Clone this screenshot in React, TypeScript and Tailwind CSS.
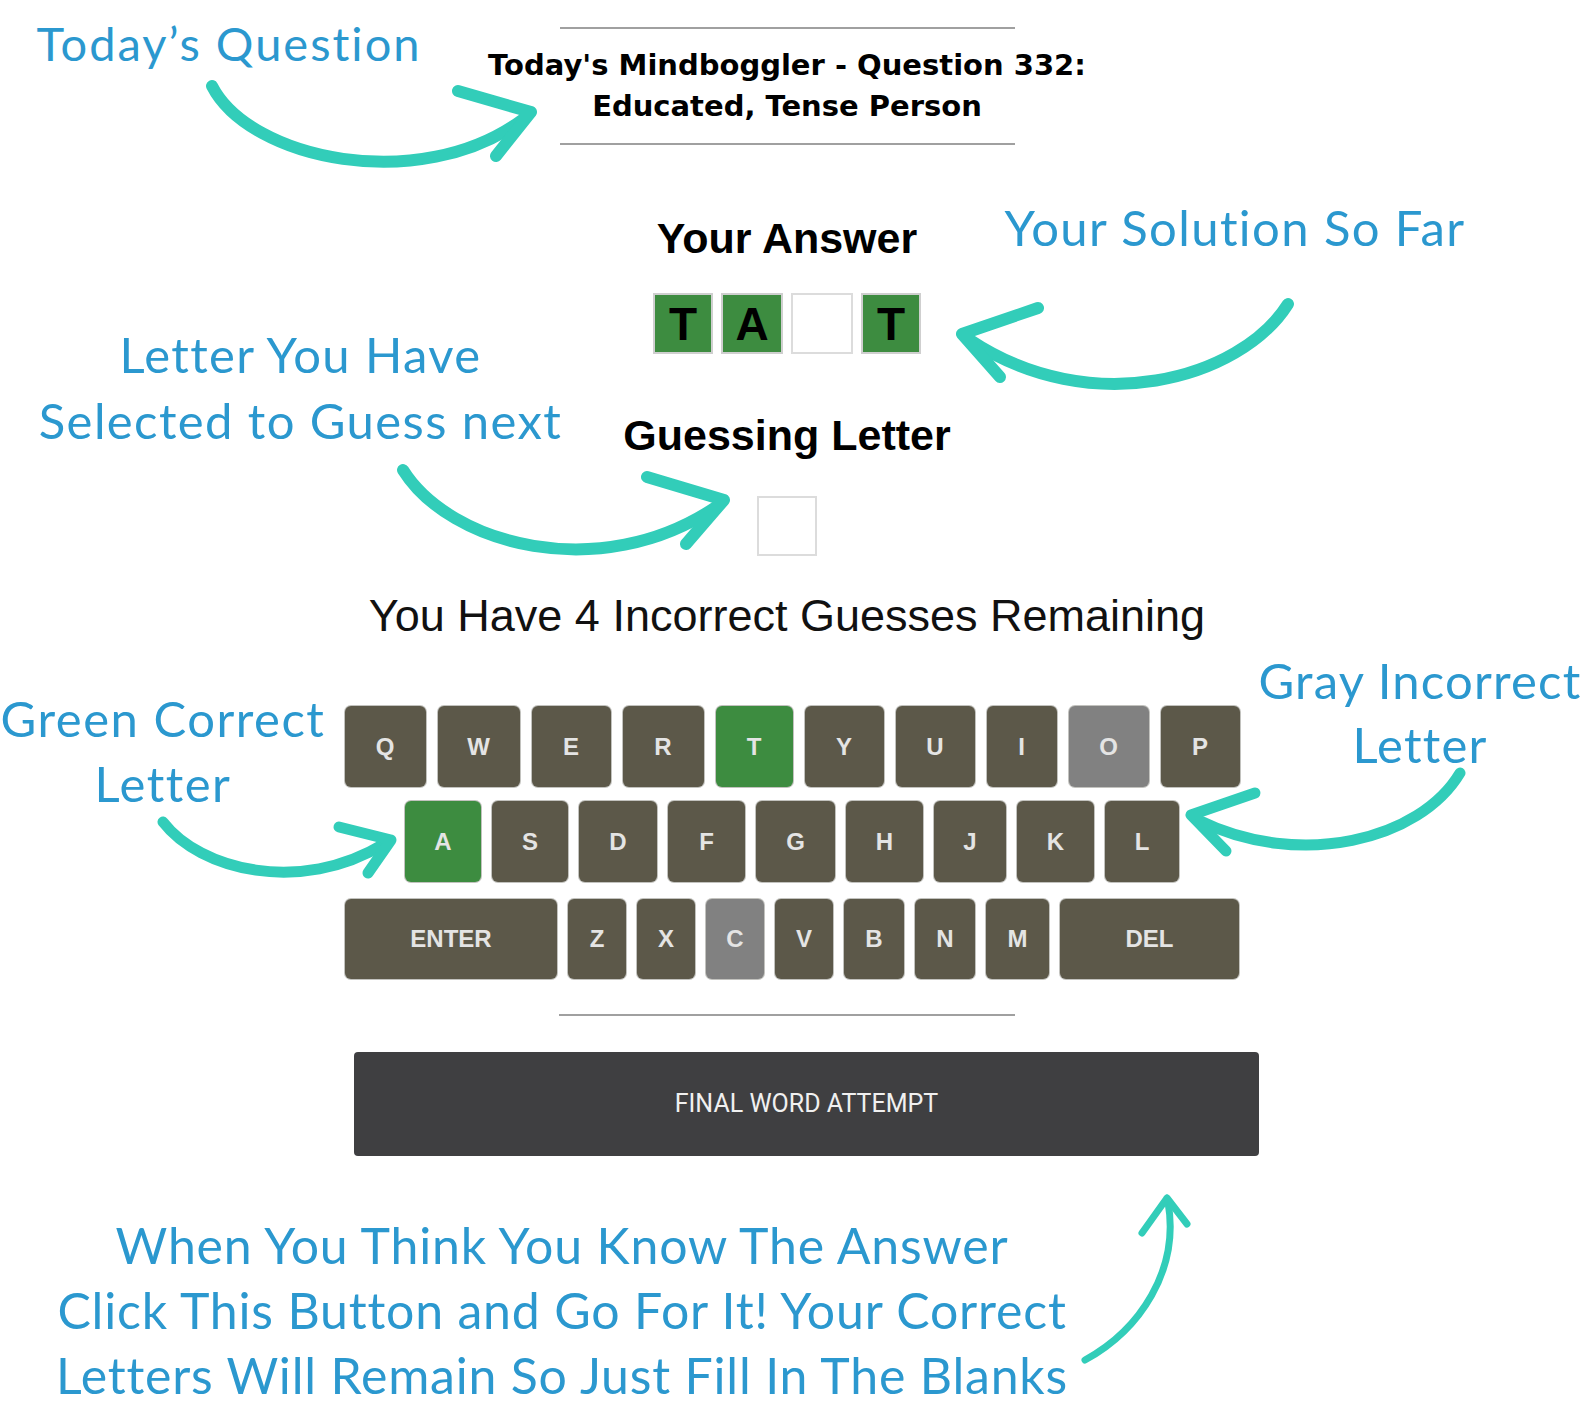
import React from "react";

type K = { l: string; w: string; c?: "g" | "x" };

const row1: K[] = [
  { l: "Q", w: "w-[81px]" },
  { l: "W", w: "w-[82px]" },
  { l: "E", w: "w-[79px]" },
  { l: "R", w: "w-[81px]" },
  { l: "T", w: "w-[77px]", c: "g" },
  { l: "Y", w: "w-[79px]" },
  { l: "U", w: "w-[79px]" },
  { l: "I", w: "w-[70px]" },
  { l: "O", w: "w-[80px]", c: "x" },
  { l: "P", w: "w-[79px]" },
];
const row2: K[] = [
  { l: "A", w: "w-[76px]", c: "g" },
  { l: "S", w: "w-[76px]" },
  { l: "D", w: "w-[78px]" },
  { l: "F", w: "w-[77px]" },
  { l: "G", w: "w-[79px]" },
  { l: "H", w: "w-[77px]" },
  { l: "J", w: "w-[72px]" },
  { l: "K", w: "w-[77px]" },
  { l: "L", w: "w-[74px]" },
];
const row3: K[] = [
  { l: "ENTER", w: "w-[212px]" },
  { l: "Z", w: "w-[58px]" },
  { l: "X", w: "w-[58px]" },
  { l: "C", w: "w-[58px]", c: "x" },
  { l: "V", w: "w-[58px]" },
  { l: "B", w: "w-[60px]" },
  { l: "N", w: "w-[60px]" },
  { l: "M", w: "w-[63px]" },
  { l: "DEL", w: "w-[179px]" },
];

function Key({ k, h }: { k: K; h: string }) {
  const bg =
    k.c === "g" ? "bg-[#3d8c40]" : k.c === "x" ? "bg-[#818181]" : "bg-[#5c5849]";
  return (
    <div
      className={`${k.w} ${h} ${bg} rounded-[6px] shadow-[0_0_0_1px_rgba(120,120,110,0.45)] flex items-center justify-center font-['Liberation_Sans',Arial,sans-serif] font-bold text-[24px] text-[#e4e4e4]`}
    >
      {k.l}
    </div>
  );
}

function Tile({ letter, w }: { letter?: string; w: string }) {
  return (
    <div
      className={`${w} h-[61px] border-2 ${
        letter ? "bg-[#3d8c40] border-[#cfcfcf]" : "bg-white border-[#dcdcdc]"
      } flex items-center justify-center font-['Liberation_Sans',Arial,sans-serif] font-bold text-[46px] leading-none text-black`}
    >
      {letter}
    </div>
  );
}

const teal = "#32cdb9";

function Arrows() {
  const common = {
    fill: "none",
    stroke: teal,
    strokeLinecap: "round" as const,
    strokeLinejoin: "round" as const,
  };
  return (
    <svg
      className="absolute left-0 top-0 pointer-events-none"
      width="1587"
      height="1421"
      viewBox="0 0 1587 1421"
    >
      {/* Today's question */}
      <path d="M 212 86 C 250 160, 420 195, 522 120" strokeWidth="12" {...common} />
      <path d="M 531 112 L 458 91 M 531 112 L 496 156" strokeWidth="12" {...common} />
      {/* Your solution so far */}
      <path d="M 1288 304 C 1240 380, 1090 420, 970 340" strokeWidth="12" {...common} />
      <path d="M 962 334 L 1038 308 M 962 334 L 1000 377" strokeWidth="12" {...common} />
      {/* Letter you have selected */}
      <path d="M 403 470 C 450 545, 600 585, 716 507" strokeWidth="12" {...common} />
      <path d="M 724 500 L 647 477 M 724 500 L 686 544" strokeWidth="12" {...common} />
      {/* Green correct */}
      <path d="M 163 822 C 200 870, 300 895, 384 844" strokeWidth="11" {...common} />
      <path d="M 391 840 L 339 827 M 391 840 L 368 873" strokeWidth="11" {...common} />
      {/* Gray incorrect */}
      <path d="M 1460 773 C 1420 840, 1300 870, 1198 820" strokeWidth="11" {...common} />
      <path d="M 1191 815 L 1255 793 M 1191 815 L 1226 851" strokeWidth="11" {...common} />
      {/* Final button */}
      <path d="M 1085 1360 C 1140 1330, 1180 1270, 1168 1202" strokeWidth="7" {...common} />
      <path d="M 1167 1198 L 1142 1233 M 1167 1198 L 1187 1224" strokeWidth="7" {...common} />
    </svg>
  );
}

export default function App() {
  return (
    <div className="relative w-[1587px] h-[1421px] bg-white overflow-hidden">
      <div className="flex flex-col items-center w-[1574px] pt-[27px]">
        <div className="w-[455px] h-[2px] bg-[#a0a0a0]" />
        <div className="mt-[16px] text-center whitespace-nowrap font-['DejaVu_Sans',sans-serif] font-bold text-[29px] leading-[41px] text-black">
          <div>Today's Mindboggler - Question 332:</div>
          <div>Educated, Tense Person</div>
        </div>
        <div className="mt-[16px] w-[455px] h-[2px] bg-[#a0a0a0]" />

        <div className="mt-[72px] font-['Liberation_Sans',Arial,sans-serif] font-bold text-[43px] leading-none text-black">
          Your Answer
        </div>

        <div className="mt-[33px] flex gap-[8px]">
          <Tile letter="T" w="w-[60px]" />
          <Tile letter="A" w="w-[62px]" />
          <Tile w="w-[62px]" />
          <Tile letter="T" w="w-[60px]" />
        </div>

        <div className="mt-[60px] font-['Liberation_Sans',Arial,sans-serif] font-bold text-[43px] leading-none text-black">
          Guessing Letter
        </div>

        <div className="mt-[39px] w-[60px] h-[60px] border-2 border-[#dcdcdc] bg-white" />

        <div className="mt-[37px] whitespace-nowrap font-['Liberation_Sans',Arial,sans-serif] text-[45px] leading-none text-[#111]">
          You Have 4 Incorrect Guesses Remaining
        </div>

        <div className="mt-[68px] ml-[10px] flex flex-col items-center">
          <div className="flex gap-[12px]">
            {row1.map((k) => (
              <Key key={k.l} k={k} h="h-[81px]" />
            ))}
          </div>
          <div className="mt-[14px] flex gap-[11px]">
            {row2.map((k) => (
              <Key key={k.l} k={k} h="h-[81px]" />
            ))}
          </div>
          <div className="mt-[17px] flex gap-[11px]">
            {row3.map((k) => (
              <Key key={k.l} k={k} h="h-[80px]" />
            ))}
          </div>
        </div>

        <div className="mt-[35px] w-[456px] h-[2px] bg-[#a0a0a0]" />

        <div className="mt-[36px] ml-[39px] w-[905px] h-[104px] rounded-[4px] bg-[#3f3f41] flex items-center justify-center font-['Roboto',sans-serif] text-[25px] text-[#f0f0f0]">
          FINAL WORD ATTEMPT
        </div>
      </div>

      {/* annotations */}
      <div className="absolute left-[-71px] top-[20px] w-[600px] text-center whitespace-nowrap font-['Lato',sans-serif] text-[47px] leading-[47px] tracking-[2px] text-[#2b98cf]">
        Today’s Question
      </div>
      <div className="absolute left-[935px] top-[203px] w-[600px] text-center whitespace-nowrap font-['Lato',sans-serif] text-[49px] leading-[49px] tracking-[1.4px] text-[#2b98cf]">
        Your Solution So Far
      </div>
      <div className="absolute left-[0px] top-[321px] w-[601px] text-center whitespace-nowrap font-['Lato',sans-serif] text-[49px] leading-[66px] tracking-[1.4px] text-[#2b98cf]">
        <div>Letter You Have</div>
        <div>Selected to Guess next</div>
      </div>
      <div className="absolute left-[-137px] top-[686px] w-[600px] text-center whitespace-nowrap font-['Lato',sans-serif] text-[49px] leading-[65px] tracking-[1.5px] text-[#2b98cf]">
        <div>Green Correct</div>
        <div>Letter</div>
      </div>
      <div className="absolute left-[1120px] top-[648px] w-[600px] text-center whitespace-nowrap font-['Lato',sans-serif] text-[49px] leading-[64px] tracking-[1.2px] text-[#2b98cf]">
        <div>Gray Incorrect</div>
        <div>Letter</div>
      </div>
      <div className="absolute left-[-38px] top-[1213px] w-[1200px] text-center whitespace-nowrap font-['Lato',sans-serif] text-[50px] leading-[65px] tracking-[0.8px] text-[#2b98cf]">
        <div>When You Think You Know The Answer</div>
        <div>Click This Button and Go For It! Your Correct</div>
        <div>Letters Will Remain So Just Fill In The Blanks</div>
      </div>

      <Arrows />
    </div>
  );
}
